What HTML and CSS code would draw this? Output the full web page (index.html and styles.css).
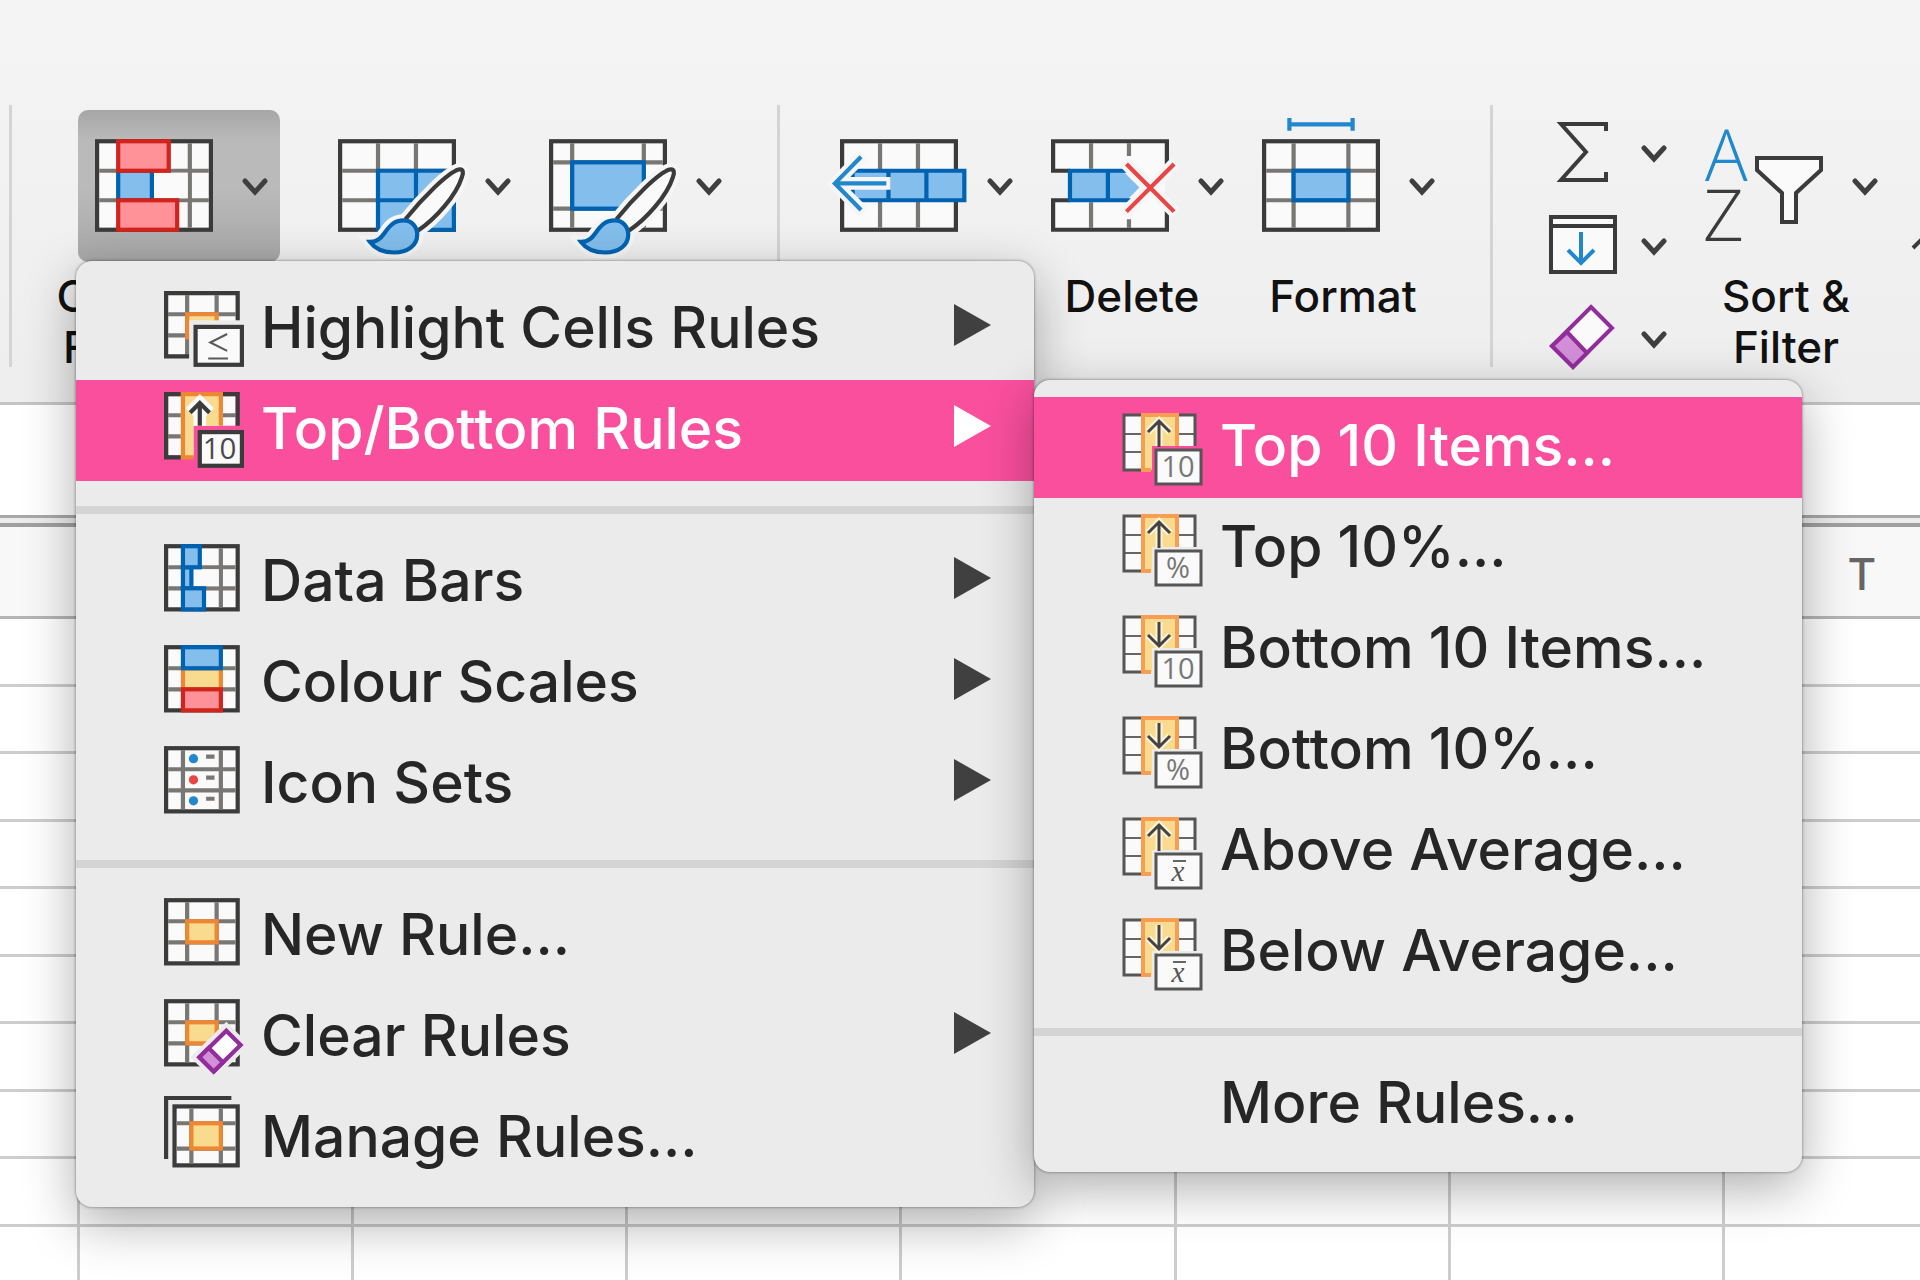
FILE: index.html
```html
<!DOCTYPE html>
<html lang="en">

<head>
    <meta charset="UTF-8">
    <meta name="viewport" content="width=device-width, initial-scale=1.0">
    <title>Conditional Formatting</title>
    <link rel="stylesheet" href="styles.css">
</head>

<body>
    <!-- Shared icon parts -->
    <svg class="defs" aria-hidden="true">
        <defs>
            <symbol id="chevron" viewBox="0 0 26 18">
                <path class="chevron-line" d="M3 3L13 14L23 3" />
            </symbol>
            <g id="brush">
                <path class="halo" d="M16 19C20 14 26 8 28.6 7.2C29.8 6.9 29.8 8 29.4 9C28 13.5 23 19 19 21.7" />
                <path class="halo" d="M7.6 24.4C11.5 24.4 11 19.3 15.6 19.3C17.5 19.3 18.8 20.8 18.8 22.7C18.8 25.2 16.5 26.9 13.3 26.9C10.8 26.9 8.8 26 7.6 24.4Z" />
                <path class="handle" d="M16 19C20 14 26 8 28.6 7.2C29.8 6.9 29.8 8 29.4 9C28 13.5 23 19 19 21.7" />
                <path class="blue" d="M7.6 24.4C11.5 24.4 11 19.3 15.6 19.3C17.5 19.3 18.8 20.8 18.8 22.7C18.8 25.2 16.5 26.9 13.3 26.9C10.8 26.9 8.8 26 7.6 24.4Z" />
            </g>
            <g id="top-grid">
                <path class="fill" d="M1 1H72V32H29V56H1Z" />
                <path class="thin" d="M1 20H20M1 38H20M54 20H72" />
                <path class="edge" d="M20 1H1V56H20M54 1H72V32" />
                <path class="yellow" d="M20 1H54V32H29V56H20Z" />
                <path class="orange-line" d="M28 56H20V1H54V32" />
                <rect class="edge fill" x="33" y="36" width="45" height="34" />
            </g>
            <g id="arrow-up">
                <path class="glow" d="M36 32V8M25 18L36 7L47 18" />
                <path class="arrow" d="M36 33V8M25 18L36 7L47 18" />
            </g>
            <g id="arrow-down">
                <path class="glow" d="M36 6V29M25 19L36 30L47 19" />
                <path class="arrow" d="M36 6V29M25 19L36 30L47 19" />
            </g>
        </defs>
    </svg>

    <header class="ribbon">
        <span class="divider"></span>
        <div class="group">
            <div class="tool tool-wide">
                <button class="tool-button active" aria-labelledby="lbl-cond">
                    <svg class="icon-large" viewBox="0 0 28 22">
                        <rect class="frame" x=".5" y=".5" width="27" height="21" />
                        <path class="grid" d="M1 7.5H27M1 14.5H27M22.5 1V21" />
                        <path class="fill" d="M14 8H22V14H14Z" />
                        <rect class="blue" x="5.5" y="7.5" width="8" height="7" />
                        <rect class="red" x="5.5" y=".5" width="12" height="7" />
                        <rect class="red" x="5.5" y="14.5" width="14" height="7" />
                    </svg>
                    <svg class="chevron"><use href="#chevron" /></svg>
                </button>
                <span class="label" id="lbl-cond">Conditional<br>Formatting</span>
            </div>
            <div class="tool">
                <button class="tool-button" aria-label="Format as Table">
                    <svg class="icon-large" viewBox="0 0 28 22">
                        <rect class="frame" x=".5" y=".5" width="27" height="21" />
                        <path class="grid" d="M1 7.5H27M1 14.5H27M9.5 1V21M18.5 1V21" />
                        <path class="blue" d="M9.5 7.5H27.5V21.5H9.5ZM18.5 7.5V21.5M9.5 14.5H27.5" />
                        <use href="#brush" />
                    </svg>
                    <svg class="chevron"><use href="#chevron" /></svg>
                </button>
            </div>
            <div class="tool">
                <button class="tool-button" aria-label="Cell Styles">
                    <svg class="icon-large" viewBox="0 0 28 22">
                        <rect class="frame" x=".5" y=".5" width="27" height="21" />
                        <path class="grid" d="M1 5.5H27M1 16.5H27M5.5 1V21M22.5 1V21" />
                        <rect class="blue" x="5.5" y="5.5" width="17" height="11" />
                        <use href="#brush" />
                    </svg>
                    <svg class="chevron"><use href="#chevron" /></svg>
                </button>
            </div>
        </div>
        <span class="divider"></span>
        <div class="group">
            <div class="tool">
                <button class="tool-button" aria-label="Insert">
                    <svg class="icon-large" viewBox="0 0 28 22">
                        <rect class="frame" x=".5" y=".5" width="27" height="21" />
                        <path class="grid" d="M9.5 1V21M18.5 1V21" />
                        <path class="blue" d="M3 7.5H29.5V14.5H3ZM11.5 7.5V14.5M20.5 7.5V14.5" />
                        <path class="halo" d="M12 10.5H-1M5.5 3.7L-1.2 10.5L5.5 17.3" />
                        <path class="sky" d="M11 10.5H-1M5 4.2L-1.2 10.5L5 16.8" />
                    </svg>
                    <svg class="chevron"><use href="#chevron" /></svg>
                </button>
            </div>
            <div class="tool">
                <button class="tool-button" aria-labelledby="lbl-delete">
                    <svg class="icon-large" viewBox="0 0 28 22">
                        <path class="fill" d="M1 1H27V21H1V15H4V7H1Z" />
                        <path class="grid" d="M9.5 1V7M9.5 15V21M18.5 1V4M18.5 19V21" />
                        <path class="outline" d="M4.5 7.5H.5V.5H27.5V6M4.5 14.5H.5V21.5H27.5V17" />
                        <path class="blue-fill" d="M4.5 7.5H17L21 11.5L18 14.5H4.5Z" />
                        <path class="blue-line" d="M18 7.5H4.5V14.5H19M13.5 7.5V14.5" />
                        <path class="halo" d="M17.5 5.5L29.6 17.6M29.6 5.5L17.5 17.6" />
                        <path class="cross" d="M17.9 5.9L29.2 17.2M29.2 5.9L17.9 17.2" />
                    </svg>
                    <svg class="chevron"><use href="#chevron" /></svg>
                </button>
                <span class="label" id="lbl-delete">Delete</span>
            </div>
            <div class="tool">
                <button class="tool-button" aria-labelledby="lbl-format">
                    <svg class="icon-large" viewBox="0 0 28 22">
                        <path class="sky" d="M6.5 -5V-2M21.5 -5V-2M6.5 -3.5H21.5" />
                        <rect class="frame" x=".5" y=".5" width="27" height="21" />
                        <path class="grid" d="M1 7.5H27M1 14.5H27M7.5 1V21M20.5 1V21" />
                        <rect class="blue" x="7.5" y="7.5" width="13" height="7" />
                    </svg>
                    <svg class="chevron"><use href="#chevron" /></svg>
                </button>
                <span class="label" id="lbl-format">Format</span>
            </div>
        </div>
        <span class="divider"></span>
        <div class="group group-last">
            <div class="stack">
                <button class="small-button" aria-label="AutoSum">
                    <svg class="icon-small" viewBox="0 0 68 66">
                        <path class="line" d="M57 12V5H12L37 33L12 61H57V53" />
                    </svg>
                    <svg class="chevron"><use href="#chevron" /></svg>
                </button>
                <button class="small-button" aria-label="Fill">
                    <svg class="icon-small" viewBox="0 0 68 66">
                        <rect class="line fill" x="2" y="5" width="64" height="55" />
                        <path class="line" d="M2 14H66" />
                        <path class="sky-px" d="M32 20V50M19 38L32 51L45 38" />
                    </svg>
                    <svg class="chevron"><use href="#chevron" /></svg>
                </button>
                <button class="small-button" aria-label="Clear">
                    <svg class="icon-small" viewBox="0 0 68 66">
                        <path class="eraser-px" d="M42 2L63 23L24 62L3 41Z" />
                        <path class="eraser-px lilac" d="M18 27L38 48L24 62L3 41Z" />
                    </svg>
                    <svg class="chevron"><use href="#chevron" /></svg>
                </button>
            </div>
            <div class="tool">
                <button class="tool-button" aria-labelledby="lbl-sort">
                    <svg class="icon-large" viewBox="0 0 118 93">
                        <text class="sort-a" x="0" y="42">A</text>
                        <text class="sort-z" x="-2" y="102">Z</text>
                        <path class="line fill" d="M52 19H116V31L91 54V83H77V54L52 31Z" />
                    </svg>
                    <svg class="chevron"><use href="#chevron" /></svg>
                </button>
                <span class="label" id="lbl-sort">Sort &amp;<br>Filter</span>
            </div>
            <button class="tool-button tool-cut" aria-label="Find and Select">
                <svg class="icon-large" viewBox="0 0 118 93">
                    <path class="line" d="M-3 109L38 68" />
                    <circle class="line" cx="62" cy="44" r="34" />
                </svg>
            </button>
        </div>
    </header>

    <input class="formula-bar" type="text" aria-label="Formula bar">
    <div class="splitter"></div>

    <main class="sheet">
        <table>
            <colgroup>
                <col class="col-first">
            </colgroup>
            <thead>
                <tr><th></th><th></th><th></th><th></th><th></th><th></th><th></th><th>T</th></tr>
            </thead>
            <tbody>
                <tr><td></td><td></td><td></td><td></td><td></td><td></td><td></td><td></td></tr>
                <tr><td></td><td></td><td></td><td></td><td></td><td></td><td></td><td></td></tr>
                <tr><td></td><td></td><td></td><td></td><td></td><td></td><td></td><td></td></tr>
                <tr><td></td><td></td><td></td><td></td><td></td><td></td><td></td><td></td></tr>
                <tr><td></td><td></td><td></td><td></td><td></td><td></td><td></td><td></td></tr>
                <tr><td></td><td></td><td></td><td></td><td></td><td></td><td></td><td></td></tr>
                <tr><td></td><td></td><td></td><td></td><td></td><td></td><td></td><td></td></tr>
                <tr><td></td><td></td><td></td><td></td><td></td><td></td><td></td><td></td></tr>
                <tr><td></td><td></td><td></td><td></td><td></td><td></td><td></td><td></td></tr>
                <tr><td></td><td></td><td></td><td></td><td></td><td></td><td></td><td></td></tr>
            </tbody>
        </table>
    </main>

    <nav class="menu menu-main" aria-label="Conditional Formatting">
        <button class="item">
            <svg class="icon" viewBox="0 0 19 18">
                <path class="fill" d="M1 1H17V7H6V15H1Z" />
                <path class="grid" d="M1 5.5H17M1 10.5H6M5.5 1V15.5M12.5 1V6" />
                <path class="outline" d="M17.5 7V.5H.5V15.5H6" />
                <path class="yellow" d="M6 6H13V7H6Z" />
                <path class="orange-unit" d="M5.5 11.5V5.5H12.5V7" />
                <rect class="menu-halo" x="7.5" y="8.5" width="11" height="9" />
                <rect class="frame" x="7.5" y="8.5" width="11" height="9" />
                <path class="symbol-line" d="M15 10.2L11 12.2L15 14.2M10.5 16H15.2" />
            </svg>
            <span>Highlight Cells Rules</span>
            <svg class="arrow-right" viewBox="0 0 37 42"><path d="M0 0L37 21L0 42Z" /></svg>
        </button>
        <button class="item selected">
            <svg class="icon" viewBox="0 0 19 18">
                <path class="fill" d="M1 1H17V8H7V15H1Z" />
                <path class="grid" d="M1 5.5H4M1 10.5H4M14 5.5H17" />
                <path class="outline" d="M4 .5H.5V15.5H4M14 .5H17.5V8" />
                <path class="yellow" d="M4.5 .5H13.5V8H7V15.5H4.5Z" />
                <path class="orange-unit" d="M7 15.5H4.5V.5H13.5V8" />
                <path class="glow-unit" d="M8.5 8V3M6.2 4.9L8.5 2.6L10.8 4.9" />
                <path class="outline" d="M8.5 8V3M6.2 4.9L8.5 2.6L10.8 4.9" />
                <rect class="frame" x="8.5" y="9.5" width="10" height="8" />
                <text class="badge-unit" x="13.2" y="16">10</text>
            </svg>
            <span>Top/Bottom Rules</span>
            <svg class="arrow-right" viewBox="0 0 37 42"><path d="M0 0L37 21L0 42Z" /></svg>
        </button>
        <hr>
        <button class="item">
            <svg class="icon" viewBox="0 0 19 18">
                <rect class="frame" x=".5" y=".5" width="17" height="15" />
                <path class="grid" d="M1 5.5H17M1 10.5H17M13.5 1V15" />
                <path class="fill" d="M7 6H13V10H7Z" />
                <rect class="blue" x="4.5" y="5.5" width="2" height="5" />
                <rect class="blue" x="4.5" y=".5" width="4" height="5" />
                <rect class="blue" x="4.5" y="10.5" width="5" height="5" />
            </svg>
            <span>Data Bars</span>
            <svg class="arrow-right" viewBox="0 0 37 42"><path d="M0 0L37 21L0 42Z" /></svg>
        </button>
        <button class="item">
            <svg class="icon" viewBox="0 0 19 18">
                <rect class="frame" x=".5" y=".5" width="17" height="15" />
                <path class="grid" d="M1 5.5H17M1 10.5H17" />
                <rect class="orange" x="4.5" y="5.5" width="9" height="5" />
                <rect class="blue" x="4.5" y=".5" width="9" height="5" />
                <rect class="red" x="4.5" y="10.5" width="9" height="5" />
            </svg>
            <span>Colour Scales</span>
            <svg class="arrow-right" viewBox="0 0 37 42"><path d="M0 0L37 21L0 42Z" /></svg>
        </button>
        <button class="item">
            <svg class="icon" viewBox="0 0 19 18">
                <rect class="frame" x=".5" y=".5" width="17" height="15" />
                <path class="grid" d="M1 5.5H17M1 10.5H17M4.5 1V15M13.5 1V15M10 2.5H12M10 7.5H12M10 12.5H12" />
                <circle class="dot-blue" cx="7" cy="3" r="1.1" />
                <circle class="dot-red" cx="7" cy="8" r="1.1" />
                <circle class="dot-blue" cx="7" cy="13" r="1.1" />
            </svg>
            <span>Icon Sets</span>
            <svg class="arrow-right" viewBox="0 0 37 42"><path d="M0 0L37 21L0 42Z" /></svg>
        </button>
        <hr>
        <button class="item">
            <svg class="icon" viewBox="0 0 19 18">
                <rect class="frame" x=".5" y=".5" width="17" height="15" />
                <path class="grid" d="M1 5.5H17M1 10.5H17M5.5 1V15M12.5 1V15" />
                <rect class="orange" x="5.5" y="5.5" width="7" height="5" />
            </svg>
            <span>New Rule...</span>
        </button>
        <button class="item">
            <svg class="icon" viewBox="0 0 19 18">
                <rect class="frame" x=".5" y=".5" width="17" height="15" />
                <path class="grid" d="M1 5.5H17M1 10.5H17M5.5 1V15M12.5 1V15" />
                <rect class="orange" x="5.5" y="5.5" width="7" height="5" />
                <path class="menu-halo" d="M14.8 7.5L18.2 10.9L11.8 17.2L8.4 13.8Z" />
                <path class="eraser" d="M14.8 7.5L18.2 10.9L11.8 17.2L8.4 13.8Z" />
                <path class="eraser lilac" d="M10.6 11.6L14 15L11.8 17.2L8.4 13.8Z" />
            </svg>
            <span>Clear Rules</span>
            <svg class="arrow-right" viewBox="0 0 37 42"><path d="M0 0L37 21L0 42Z" /></svg>
        </button>
        <button class="item">
            <svg class="icon" viewBox="0 0 19 18">
                <path class="outline" d="M.5 14V-.5H16" />
                <rect class="frame" x="2.5" y="1.5" width="15" height="14" />
                <path class="grid" d="M3 5.5H17M3 11.5H17M6.5 2V15M13.5 2V15" />
                <rect class="orange" x="6.5" y="5.5" width="7" height="6" />
            </svg>
            <span>Manage Rules...</span>
        </button>
    </nav>

    <nav class="menu menu-sub" aria-label="Top/Bottom Rules">
        <button class="item selected">
            <svg class="icon icon-fine" viewBox="0 0 80 72">
                <use href="#top-grid" />
                <use href="#arrow-up" />
                <text class="badge" x="55" y="63">10</text>
            </svg>
            <span>Top 10 Items...</span>
        </button>
        <button class="item">
            <svg class="icon icon-fine" viewBox="0 0 80 72">
                <use href="#top-grid" />
                <use href="#arrow-up" />
                <text class="badge" x="55" y="63">%</text>
            </svg>
            <span>Top 10%...</span>
        </button>
        <button class="item">
            <svg class="icon icon-fine" viewBox="0 0 80 72">
                <use href="#top-grid" />
                <use href="#arrow-down" />
                <text class="badge" x="55" y="63">10</text>
            </svg>
            <span>Bottom 10 Items...</span>
        </button>
        <button class="item">
            <svg class="icon icon-fine" viewBox="0 0 80 72">
                <use href="#top-grid" />
                <use href="#arrow-down" />
                <text class="badge" x="55" y="63">%</text>
            </svg>
            <span>Bottom 10%...</span>
        </button>
        <button class="item">
            <svg class="icon icon-fine" viewBox="0 0 80 72">
                <use href="#top-grid" />
                <use href="#arrow-up" />
                <text class="badge mean" x="55" y="63">x</text>
                <path class="thin" d="M50 43H63" />
            </svg>
            <span>Above Average...</span>
        </button>
        <button class="item">
            <svg class="icon icon-fine" viewBox="0 0 80 72">
                <use href="#top-grid" />
                <use href="#arrow-down" />
                <text class="badge mean" x="55" y="63">x</text>
                <path class="thin" d="M50 43H63" />
            </svg>
            <span>Below Average...</span>
        </button>
        <hr>
        <button class="item">
            <span class="icon icon-fine"></span>
            <span>More Rules...</span>
        </button>
    </nav>
</body>

</html>
```

FILE: styles.css
```css
*,
*::after,
*::before {
    box-sizing: border-box;
    padding: 0;
    margin: 0;
}

body {
    display: flex;
    flex-direction: column;
    position: relative;
    height: 100vh;
    overflow: hidden;
    background-color: #fff;
    font-family: Inter, "Liberation Sans", sans-serif;
    font-weight: 500;
}

button {
    border: none;
    background: none;
    font: inherit;
    color: inherit;
}

svg {
    display: block;
    flex: none;
    overflow: visible;
}

.defs {
    position: absolute;
    width: 0;
    height: 0;
}

/* Ribbon */
.ribbon {
    display: flex;
    flex: none;
    align-items: flex-start;
    overflow: hidden;
    padding: 105px 0 29px 9px;
    background: linear-gradient(#f4f4f4, #eee);
    border-bottom: 3px solid #c4c4c4;
}

.divider {
    flex: none;
    width: 3px;
    height: 262px;
    background-color: #d4d4d4;
}

.group {
    display: flex;
    flex: none;
    gap: 9px;
    padding: 5px 43px 0;
}

.group-last {
    flex: 1;
    min-width: 0;
    overflow: hidden;
    padding-right: 0;
}

.tool {
    display: flex;
    flex: none;
    flex-direction: column;
    align-items: center;
    gap: 9px;
    width: 202px;
}

.tool-wide {
    width: 248px;
    margin-right: 9px;
}

.tool-button {
    display: flex;
    align-items: center;
    gap: 29px;
    width: 202px;
    height: 152px;
    padding: 0 12px 2px 17px;
    border-radius: 10px;
}

.tool-button.active {
    background: linear-gradient(#a6a6a6, #bababa 20%, #bababa 50%, #a8a8a8);
}

.tool-cut {
    flex: 1;
    min-width: 0;
    width: auto;
    padding-right: 0;
}

.label {
    padding-right: 6px;
    font-size: 44px;
    line-height: 51px;
    text-align: center;
    white-space: nowrap;
    color: #111;
}

.stack {
    display: flex;
    flex: none;
    flex-direction: column;
    gap: 27px;
    padding-top: 9px;
}

.small-button {
    display: flex;
    align-items: center;
    gap: 24px;
    padding: 0 12px 0 13px;
}

.icon-large {
    width: 118px;
    height: 93px;
}

.icon-small {
    width: 68px;
    height: 66px;
}

.chevron {
    width: 26px;
    height: 18px;
    margin-top: 4px;
}

/* Icon strokes, drawn on a one-unit grid */
.frame {
    fill: #fafafa;
    stroke: #3b3b3b;
}

.fill {
    fill: #fafafa;
}

.outline {
    fill: none;
    stroke: #3b3b3b;
}

.grid {
    fill: none;
    stroke: #797774;
}

.blue {
    fill: #83beec;
    stroke: #0063b1;
}

.blue-fill {
    fill: #83beec;
}

.blue-line {
    fill: none;
    stroke: #0063b1;
}

.red {
    fill: #ff9198;
    stroke: #d1241c;
}

.orange {
    fill: #f8db8f;
    stroke: #ed8733;
}

.yellow {
    fill: #f8db8f;
}

.orange-unit {
    fill: none;
    stroke: #ed8733;
}

.halo {
    fill: none;
    stroke: #f6f6f6;
    stroke-width: 3;
}

.menu-halo {
    fill: none;
    stroke: #ebebeb;
    stroke-width: 3;
}

.handle {
    fill: #fafafa;
    stroke: #3b3b3b;
}

.sky {
    fill: none;
    stroke: #2188cd;
}

.cross {
    stroke: #eb4444;
}

.eraser {
    fill: #fff;
    stroke: #922e9b;
}

.symbol-line {
    fill: none;
    stroke: #5a5a5a;
    stroke-width: 0.5;
}

.glow-unit {
    fill: none;
    stroke: #fafafa;
    stroke-width: 3;
}

.dot-blue {
    fill: #2188cd;
}

.dot-red {
    fill: #eb4444;
}

.badge-unit {
    font-family: "Open Sans", sans-serif;
    font-size: 7px;
    font-weight: 400;
    text-anchor: middle;
    fill: #4a4a4a;
}

/* Icon strokes, drawn in pixels */
.chevron-line {
    fill: none;
    stroke: #3f3f3f;
    stroke-width: 5;
    stroke-linecap: round;
}

.line {
    fill: none;
    stroke: #3b3b3b;
    stroke-width: 4;
}

.line.fill {
    fill: #fafafa;
}

.sky-px {
    fill: none;
    stroke: #2188cd;
    stroke-width: 4;
}

.eraser-px {
    fill: #fafafa;
    stroke: #922e9b;
    stroke-width: 4;
}

.lilac {
    fill: #d38fd8;
}

.edge {
    fill: none;
    stroke: #555;
    stroke-width: 3;
}

.edge.fill {
    fill: #fafafa;
}

.thin {
    fill: none;
    stroke: #666;
    stroke-width: 2;
}

.orange-line {
    fill: none;
    stroke: #f99d52;
    stroke-width: 4;
}

.glow {
    fill: none;
    stroke: #fdf3d8;
    stroke-width: 7;
}

.arrow {
    fill: none;
    stroke: #444;
    stroke-width: 3;
}

.badge {
    font-family: "Open Sans", sans-serif;
    font-size: 29px;
    font-weight: 400;
    text-anchor: middle;
    fill: #777;
}

.badge.mean {
    font-family: "Liberation Serif", serif;
    font-style: italic;
    fill: #555;
}

.sort-a,
.sort-z {
    font-family: "Open Sans", sans-serif;
    font-size: 71px;
    font-weight: 300;
    fill: #3b3b3b;
}

.sort-a {
    fill: #2188cd;
}

/* Formula bar and sheet */
.formula-bar {
    flex: none;
    width: 100%;
    height: 110px;
    border: none;
    background-color: #fff;
}

.splitter {
    flex: none;
    height: 12px;
    border-top: 3px solid #a8a8a8;
    border-bottom: 4px solid #a0a0a0;
    background-color: #ececec;
}

.sheet {
    flex: 1;
    overflow: hidden;
}

table {
    width: 1999px;
    table-layout: fixed;
    border-collapse: separate;
    border-spacing: 0;
}

.col-first {
    width: 80px;
}

th {
    height: 92px;
    padding-top: 4px;
    border-bottom: 3px solid #b4b4b4;
    background-color: #f8f8f8;
    font-size: 44px;
    font-weight: 500;
    color: #666;
}

td {
    height: 67px;
    border-right: 3px solid #cdcdcd;
    border-bottom: 3px solid #cdcdcd;
}

tr:nth-child(odd) td {
    height: 68px;
}

/* Menus */
.menu {
    position: absolute;
    display: flex;
    flex-direction: column;
    padding: 17px 0;
    border-radius: 16px;
    background-color: #ebebeb;
    box-shadow: 0 0 3px rgba(0, 0, 0, 0.5), 0 16px 52px rgba(0, 0, 0, 0.32);
    font-size: 57px;
    color: #262626;
}

.menu-main {
    top: 261px;
    left: 76px;
    width: 958px;
    padding: 18px 0;
}

.menu-sub {
    top: 380px;
    left: 1034px;
    width: 768px;
}

.item {
    display: flex;
    align-items: center;
    gap: 17px;
    height: 101px;
    padding: 0 43px 4px 88px;
    text-align: left;
    white-space: nowrap;
}

.item.selected {
    background-color: #fa4f9d;
    color: #fff;
}

.menu hr {
    height: 8px;
    margin: 25px 0 18px;
    border: none;
    background-color: #d4d4d4;
}

.icon {
    width: 80px;
    height: 76px;
    margin-top: 3px;
}

.icon-fine {
    height: 72px;
    margin-top: 8px;
}

.menu-sub .item {
    padding-left: 89px;
}

.arrow-right {
    width: 37px;
    height: 42px;
    margin: 0 0 6px auto;
    fill: #404040;
}

.selected .arrow-right {
    fill: #fff;
}
```
